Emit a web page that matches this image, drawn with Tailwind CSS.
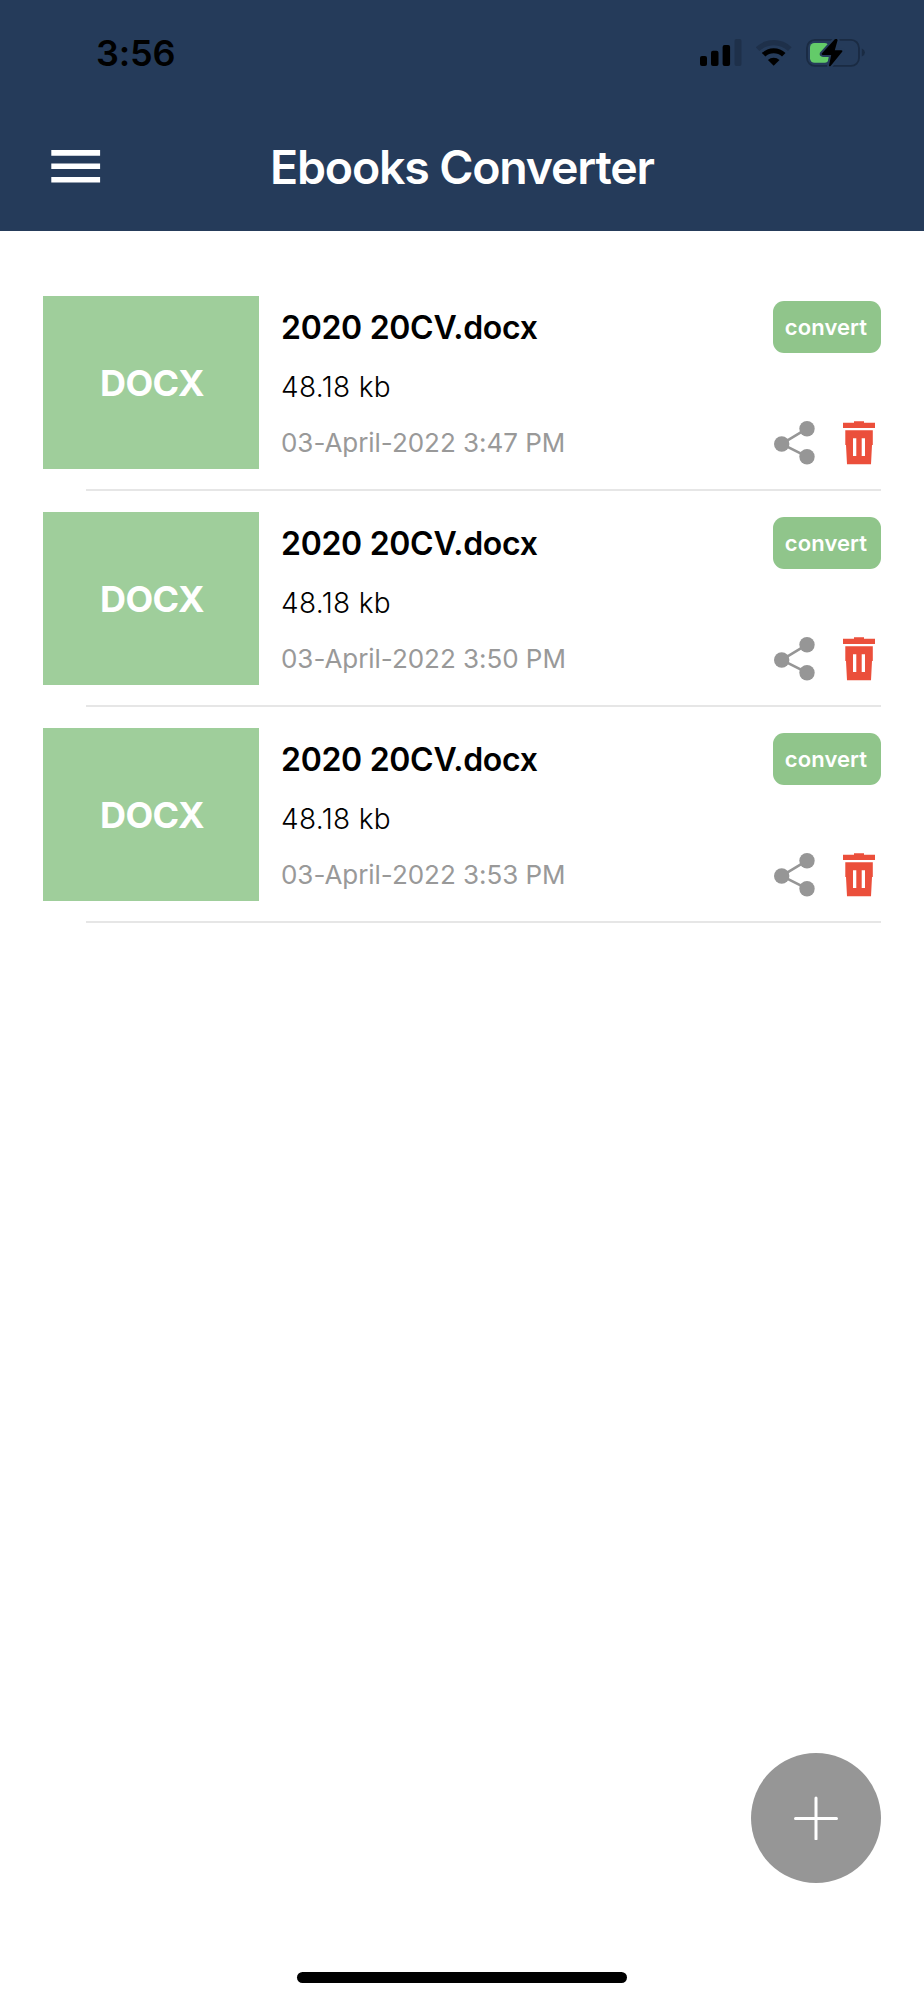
<!DOCTYPE html>
<html lang="en">
<head>
<meta charset="utf-8">
<title>Ebooks Converter</title>
<script src="https://cdn.jsdelivr.net/npm/@tailwindcss/browser@4"></script>
</head>
<body class="bg-white font-['Inter',sans-serif]">
<svg class="hidden">
  <symbol id="share" viewBox="0 0 42 44">
    <path d="M33 7.7 7.7 23 33 35.7" fill="none" stroke="#969696" stroke-width="2.6"/>
    <circle cx="33" cy="7.7" r="7.7" fill="#969696"/><circle cx="7.7" cy="23" r="7.7" fill="#969696"/><circle cx="33" cy="35.7" r="7.7" fill="#969696"/>
  </symbol>
  <symbol id="trash" viewBox="0 0 32 44">
    <path fill="#eb4f3b" fill-rule="evenodd" d="M0 1.7H11V.3H21V1.7H32V7H0ZM2.3 9.3H29.8V24H29L28 43.3H4L3 24H2.3ZM10 17.3V35H13.3V17.3ZM18.7 17.3V35H22V17.3Z"/>
  </symbol>
</svg>
<div class="flex h-[2000px] w-[924px] flex-col overflow-hidden">
  <header class="h-[231px] bg-[#253b5a]">
    <div class="flex h-[105px] items-center justify-between pr-[59px] pl-24">
      <span class="pt-px text-[36px] leading-none font-semibold tracking-[-0.2px] text-black">3:56</span>
      <svg class="h-[28px] w-[166px]" viewBox="0 0 166 28">
        <g transform="translate(1 0)">
        <rect x="0" y="17" width="7" height="10" rx="2"/><rect x="11" y="11.7" width="7.5" height="15.3" rx="2"/><rect x="22.6" y="6" width="7.5" height="21" rx="2"/>
        <rect x="34.5" y="0" width="7" height="27" rx="2" fill="#1e304a"/>
        <path d="M55.8 8.3A25.5 25.5 0 0 1 91.6 8.3L88 12A20.5 20.5 0 0 0 59.4 12Z" fill="#1e304a"/>
        <path d="M61.9 14A17 17 0 0 1 85.5 14L82 17.6A12 12 0 0 0 65.4 17.6Z"/>
        <path d="M67.9 21A8.5 8.5 0 0 1 79.5 21L73.7 26.8Z"/>
        <rect x="107" y=".9" width="52" height="26" rx="8" fill="none" stroke="#1a2b43" stroke-width="1.8"/>
        <path d="M161.8 9.5Q165 11 165 13.5T161.8 17.5Z" fill="#1a2b43"/>
        <rect x="110" y="3.9" width="19" height="19.8" rx="4.5" fill="#63cb69"/>
        <path d="M134.8.3 121.8 14.5Q121.3 16 123 16H131.2L129 26.4Q129.3 28 130.8 26.8L142.2 12.8Q143 11.3 141.2 11.3H134.8L137.6 1.3Q137.2-.9 134.8.3Z" stroke="#253b5a" stroke-width="4" paint-order="stroke"/>
        </g>
      </svg>
    </div>
    <div class="flex h-[126px] items-center pb-1">
      <svg class="ml-[51px] h-[34px] w-[50px]" viewBox="0 0 50 34" fill="#fff"><path d="M.3 1.1H49.1V6.7H.3ZM.3 14.6H49.1V20.1H.3ZM.3 28H49.1V33.6H.3Z"/></svg>
      <h1 class="ml-[169px] pt-0.5 text-[46.5px] leading-none font-semibold tracking-[-1.2px] whitespace-nowrap text-white">Ebooks Converter</h1>
    </div>
  </header>

  <main class="flex-1 pt-[65px] pr-[43px] pl-[43px]">
    <article class="h-[216px]">
      <div class="flex h-[173px]">
        <div class="flex w-[216px] items-center justify-center bg-[#9fce9b] pl-0.5 text-[36px] font-bold tracking-[-0.6px] text-white">DOCX</div>
        <div class="ml-[22px] flex-1 pt-px whitespace-nowrap">
          <h2 class="text-[32px] leading-[62px] font-semibold tracking-[-0.3px] text-black">2020 20CV.docx</h2>
          <p class="text-[28px] leading-[57px] font-light tracking-[0.35px] text-black">48.18 kb</p>
          <p class="text-[26px] leading-[54px] tracking-[-0.04px] text-[#999]">03-April-2022 3:47 PM</p>
        </div>
        <div class="flex w-[108px] flex-col pt-[5px]">
          <button class="h-[52px] rounded-[11px] bg-[#90c58b] pr-0.5 text-[22px] font-semibold tracking-[0.1px] text-white">convert</button>
          <div class="mt-[68px] flex justify-between pr-[6px]"><svg class="ml-px h-11 w-[42px]"><use href="#share"/></svg><svg class="h-11 w-8"><use href="#trash"/></svg></div>
        </div>
      </div>
      <hr class="mt-5 ml-[43px] border-t-2 border-[#e6e6e6]">
    </article>
    <article class="h-[216px]">
      <div class="flex h-[173px]">
        <div class="flex w-[216px] items-center justify-center bg-[#9fce9b] pl-0.5 text-[36px] font-bold tracking-[-0.6px] text-white">DOCX</div>
        <div class="ml-[22px] flex-1 pt-px whitespace-nowrap">
          <h2 class="text-[32px] leading-[62px] font-semibold tracking-[-0.3px] text-black">2020 20CV.docx</h2>
          <p class="text-[28px] leading-[57px] font-light tracking-[0.35px] text-black">48.18 kb</p>
          <p class="text-[26px] leading-[54px] tracking-[-0.04px] text-[#999]">03-April-2022 3:50 PM</p>
        </div>
        <div class="flex w-[108px] flex-col pt-[5px]">
          <button class="h-[52px] rounded-[11px] bg-[#90c58b] pr-0.5 text-[22px] font-semibold tracking-[0.1px] text-white">convert</button>
          <div class="mt-[68px] flex justify-between pr-[6px]"><svg class="ml-px h-11 w-[42px]"><use href="#share"/></svg><svg class="h-11 w-8"><use href="#trash"/></svg></div>
        </div>
      </div>
      <hr class="mt-5 ml-[43px] border-t-2 border-[#e6e6e6]">
    </article>
    <article class="h-[216px]">
      <div class="flex h-[173px]">
        <div class="flex w-[216px] items-center justify-center bg-[#9fce9b] pl-0.5 text-[36px] font-bold tracking-[-0.6px] text-white">DOCX</div>
        <div class="ml-[22px] flex-1 pt-px whitespace-nowrap">
          <h2 class="text-[32px] leading-[62px] font-semibold tracking-[-0.3px] text-black">2020 20CV.docx</h2>
          <p class="text-[28px] leading-[57px] font-light tracking-[0.35px] text-black">48.18 kb</p>
          <p class="text-[26px] leading-[54px] tracking-[-0.04px] text-[#999]">03-April-2022 3:53 PM</p>
        </div>
        <div class="flex w-[108px] flex-col pt-[5px]">
          <button class="h-[52px] rounded-[11px] bg-[#90c58b] pr-0.5 text-[22px] font-semibold tracking-[0.1px] text-white">convert</button>
          <div class="mt-[68px] flex justify-between pr-[6px]"><svg class="ml-px h-11 w-[42px]"><use href="#share"/></svg><svg class="h-11 w-8"><use href="#trash"/></svg></div>
        </div>
      </div>
      <hr class="mt-5 ml-[43px] border-t-2 border-[#e6e6e6]">
    </article>
  </main>

  <footer class="flex h-[247px] flex-col">
    <button class="mr-[43px] flex size-[130px] items-center justify-center self-end rounded-full bg-[#969696]">
      <svg class="size-[44px]" viewBox="0 0 44 44" stroke="#fff" stroke-width="3" stroke-linecap="round"><path d="M22 2V43M1.5 22.5H42.5"/></svg>
    </button>
    <div class="mt-[89px] ml-[297px] h-[11px] w-[330px] rounded-full bg-black"></div>
  </footer>
</div>
</body>
</html>
